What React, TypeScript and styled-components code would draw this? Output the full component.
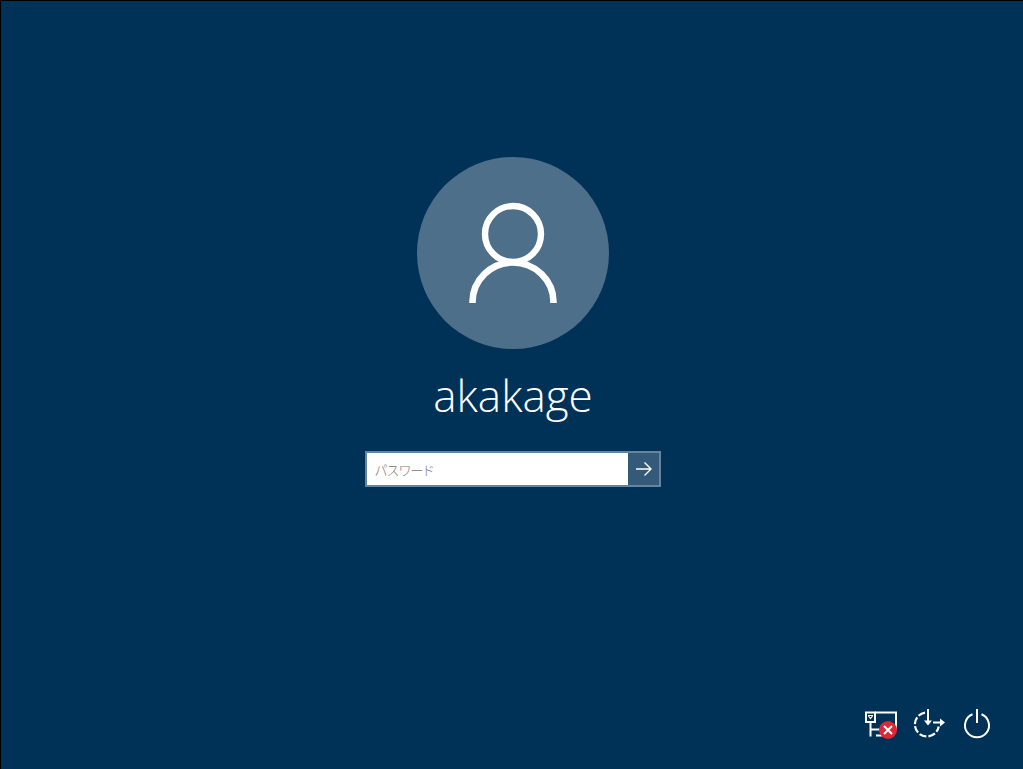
import React from "react";
import styled, { createGlobalStyle } from "styled-components";

const GlobalStyle = createGlobalStyle`
  *, *::before, *::after { box-sizing: border-box; }
  body { margin: 0; background: #003156; }
`;

const Screen = styled.main`
  display: flex;
  flex-direction: column;
  min-height: 100vh;
  background: #003156;
  border-top: 1px solid #000;
  border-left: 1px solid #000;
  color: #fff;
  font-family: "Open Sans", "Noto Sans CJK JP", sans-serif;
`;

const SignIn = styled.section`
  display: flex;
  flex-direction: column;
  align-items: center;
  padding: 156px 0 24px 2px;
`;

const Avatar = styled.svg`
  width: 192px;
  height: 192px;
`;

const UserName = styled.h1`
  margin: 12px 0 22px;
  font-size: 44px;
  font-weight: 300;
  line-height: 68px;
`;

const PasswordForm = styled.form`
  display: flex;
  width: 296px;
  max-width: 100%;
  height: 36px;
  border: 2px solid #66859d;
`;

const PasswordInput = styled.input`
  flex: 1;
  min-width: 0;
  padding: 0 8px;
  border: 0;
  border-radius: 0;
  outline: none;
  background: #fff;
  color: #000;
  font-family: "Noto Sans CJK JP", sans-serif;
  font-size: 13px;
  font-weight: 300;
  font-feature-settings: "palt";

  &::placeholder {
    color: #767676;
    opacity: 1;
  }
`;

const SubmitButton = styled.button`
  display: flex;
  align-items: center;
  justify-content: center;
  width: 31px;
  padding: 0;
  border: 0;
  background: #335a78;
  color: #fff;
`;

const SystemBar = styled.footer`
  display: flex;
  justify-content: flex-end;
  margin-top: auto;
  padding: 0 22px 21px 0;
`;

const SystemButton = styled.button`
  display: flex;
  align-items: center;
  justify-content: center;
  width: 48px;
  height: 48px;
  padding: 0;
  border: 0;
  background: transparent;
  color: #fff;
`;

const NetworkIcon = () => (
  <svg width="32" height="32" viewBox="0 0 32 32" fill="none" stroke="currentColor" strokeWidth="2" aria-hidden="true">
    <path d="M10 4.5H31V22" />
    <rect x="1" y="4.5" width="9" height="9.5" />
    <path d="M3 7.5h5M3.5 8l2 2.5 2-2.5" strokeWidth="1.2" />
    <path d="M5.5 14v14.5M5.5 21.5H15M11 27.5h6" />
    <circle cx="23" cy="22" r="9" fill="#dc2834" stroke="none" />
    <path d="M19 18l8 8M27 18l-8 8" strokeWidth="2" />
  </svg>
);

const AccessIcon = () => (
  <svg width="32" height="32" viewBox="0 0 32 32" fill="none" stroke="currentColor" strokeWidth="2" aria-hidden="true">
    <path d="M12 4.6A12 12 0 1 0 25.7 18.5" strokeWidth="2.2" strokeDasharray="7.2 2.1" />
    <path d="M15 1v13M20 14.5h9" />
    <path d="M11 12.5h8l-4 5zM27 10.5l5 4-5 4z" fill="currentColor" stroke="none" />
  </svg>
);

const PowerIcon = () => (
  <svg width="32" height="32" viewBox="0 0 32 32" fill="none" stroke="currentColor" strokeWidth="2" aria-hidden="true">
    <path d="M11.5 6.2a12 12 0 1 0 9 0" />
    <path d="M16 1v14" />
  </svg>
);

export default function App() {
  return (
    <>
      <GlobalStyle />
      <Screen>
        <SignIn>
          <Avatar viewBox="0 0 192 192" fill="none" aria-hidden="true">
            <circle cx="96" cy="96" r="96" fill="#4d6f89" />
            <circle cx="96" cy="77" r="28" stroke="#fff" strokeWidth="6.4" />
            <path d="M55.5 146v-1a40.5 39.5 0 0 1 81 0v1" stroke="#fff" strokeWidth="6.6" />
          </Avatar>
          <UserName>akakage</UserName>
          <PasswordForm onSubmit={(event) => event.preventDefault()}>
            <PasswordInput type="password" placeholder="パスワード" aria-label="パスワード" />
            <SubmitButton type="submit" aria-label="サインイン">
              <svg width="18" height="18" viewBox="0 0 18 18" fill="none" stroke="currentColor" strokeWidth="1.4" aria-hidden="true">
                <path d="M1 9h15M9.5 2.5L16 9l-6.5 6.5" />
              </svg>
            </SubmitButton>
          </PasswordForm>
        </SignIn>
        <SystemBar>
          <SystemButton type="button" aria-label="ネットワーク">
            <NetworkIcon />
          </SystemButton>
          <SystemButton type="button" aria-label="コンピューターの簡単操作">
            <AccessIcon />
          </SystemButton>
          <SystemButton type="button" aria-label="電源">
            <PowerIcon />
          </SystemButton>
        </SystemBar>
      </Screen>
    </>
  );
}
